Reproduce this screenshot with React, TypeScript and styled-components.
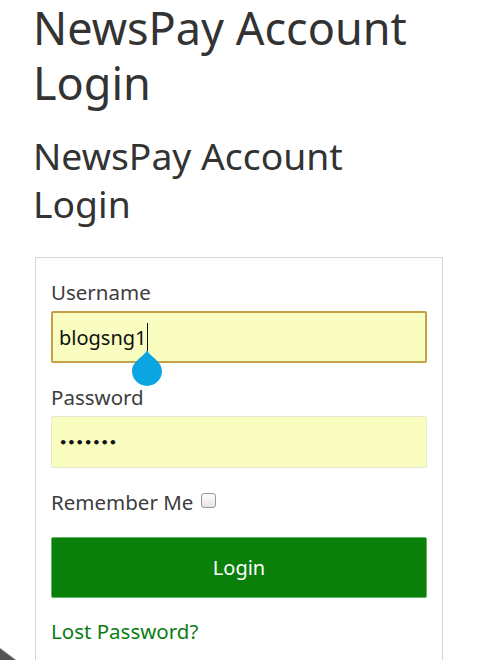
import styled, { createGlobalStyle } from "styled-components";

const GlobalStyle = createGlobalStyle`
  html, body {
    margin: 0;
    padding: 0;
    background: #fff;
    overflow: hidden;
  }
  body {
    font-family: "Noto Sans", "Open Sans", sans-serif;
    color: #333;
  }
`;

const Page = styled.div`
  width: 410px;
  padding-left: 33px;
`;

const Title = styled.h1`
  margin: 0;
  font-size: 45px;
  line-height: 55px;
  font-weight: 400;
  color: #333;
`;

const SubTitle = styled.h2`
  margin: 22px 0 0;
  font-size: 37.3px;
  line-height: 48px;
  font-weight: 400;
  color: #333;
`;

const LoginBox = styled.form`
  margin: 29px 0 0 2px;
  width: 376px;
  border: 1px solid #d6d6d6;
  border-bottom: none;
  padding: 19px 15px 40px;
  display: flex;
  flex-direction: column;
`;

const Field = styled.div`
  position: relative;
  margin-bottom: 19px;
`;

const Label = styled.label`
  display: block;
  font-size: 20.5px;
  line-height: 30px;
  color: #3d3d3d;
`;

const Input = styled.div<{ $focused?: boolean }>`
  box-sizing: border-box;
  margin-top: 4px;
  height: 52px;
  background: #fafdc0;
  border: ${(p) => (p.$focused ? "2px solid #c4a146" : "1px solid #e6e8d6")};
  border-radius: 2px;
  padding-left: ${(p) => (p.$focused ? "6px" : "7px")};
  display: flex;
  align-items: center;
  font-size: 20px;
  color: #111;
`;

const Caret = styled.span`
  display: inline-block;
  width: 1px;
  height: 28px;
  background: #111;
`;

const Dots = styled.span`
  font-size: 13px;
  font-weight: 700;
  font-family: "DejaVu Sans", sans-serif;
`;

const Handle = styled.svg`
  position: absolute;
  left: 81px;
  top: 73px;
`;

const RememberRow = styled.div`
  display: flex;
  align-items: flex-start;
  font-size: 20.5px;
  line-height: 30px;
  color: #3d3d3d;
  margin-bottom: 20px;
`;

const Check = styled.span`
  box-sizing: border-box;
  width: 15px;
  height: 15px;
  margin: 6px 0 0 8px;
  border: 1px solid #999;
  border-radius: 3px;
  background: linear-gradient(#fdfdfd, #e4e4e4);
`;

const Button = styled.div`
  box-sizing: border-box;
  height: 61px;
  background: #0a800a;
  border: 1px solid #5fb36a;
  border-radius: 2px;
  color: #fff;
  font-size: 20px;
  display: flex;
  align-items: center;
  justify-content: center;
  margin-bottom: 18px;
`;

const LostLink = styled.a`
  font-size: 20.5px;
  line-height: 30px;
  color: #0a7d12;
  text-decoration: none;
`;

const Corner = styled.svg`
  position: fixed;
  left: 0;
  bottom: 0;
`;

export default function App() {
  return (
    <>
      <GlobalStyle />
      <Page>
        <Title>NewsPay Account Login</Title>
        <SubTitle>NewsPay Account Login</SubTitle>
        <LoginBox>
          <Field>
            <Label>Username</Label>
            <Input $focused>
              blogsng1
              <Caret />
            </Input>
            <Handle width="30" height="36" viewBox="0 0 30 36">
              <path
                d="M15 0 C17 6 30 11 30 21 A15 15 0 0 1 0 21 C0 11 13 6 15 0 Z"
                fill="#0ba6e2"
              />
            </Handle>
          </Field>
          <Field>
            <Label>Password</Label>
            <Input>
              <Dots>•••••••</Dots>
            </Input>
          </Field>
          <RememberRow>
            Remember Me
            <Check />
          </RememberRow>
          <Button>Login</Button>
          <LostLink href="#">Lost Password?</LostLink>
        </LoginBox>
      </Page>
      <Corner width="20" height="14" viewBox="0 0 20 14">
        <polygon points="0,2 16,14 0,14" fill="#555" />
        <line x1="0" y1="2" x2="16" y2="14" stroke="#bbb" strokeWidth="1" />
      </Corner>
    </>
  );
}
